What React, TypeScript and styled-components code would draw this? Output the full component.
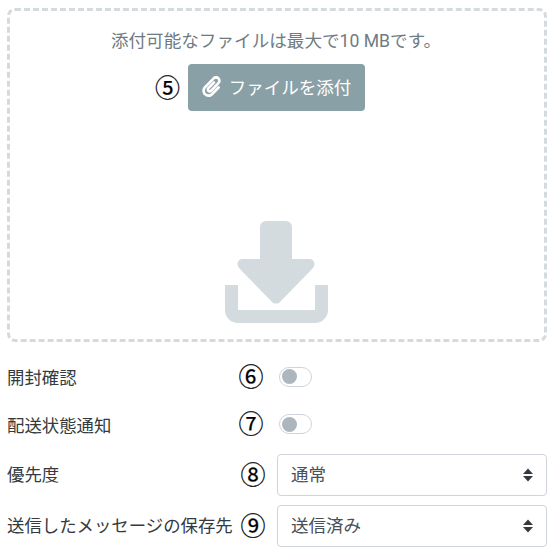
import styled, { createGlobalStyle } from "styled-components";
import { FaPaperclip } from "react-icons/fa";

const GlobalStyle = createGlobalStyle`
  html, body {
    margin: 0;
    padding: 0;
    background: #fff;
  }
  body {
    font-family: Roboto, "Noto Sans CJK JP", sans-serif;
    font-size: 17.5px;
    color: #343a40;
  }
`;

const Page = styled.div`
  width: 555px;
  height: 556px;
  box-sizing: border-box;
  padding: 8px 8px 0 7px;
  overflow: hidden;
`;

const DropZone = styled.div`
  box-sizing: border-box;
  width: 540px;
  height: 334px;
  padding: 20px 2px 0 0;
  border: 3px dashed #d3dbde;
  border-radius: 8px;
  display: flex;
  flex-direction: column;
  align-items: center;
`;

const Hint = styled.p`
  margin: 0;
  font-size: 17.6px;
  line-height: 21px;
  color: #6f7b82;
`;

const AttachWrap = styled.div`
  position: relative;
  margin-top: 12px;
`;

const AttachButton = styled.button`
  box-sizing: border-box;
  width: 177px;
  height: 47px;
  border: 0;
  border-radius: 4px;
  background: #8aa0a7;
  color: #fff;
  font-family: inherit;
  font-size: 17.5px;
  display: flex;
  align-items: center;
  justify-content: center;
  gap: 7px;
  padding: 0 0 2px;
`;

const Marker = styled.span`
  font-family: "Noto Sans CJK JP", sans-serif;
  font-size: 25px;
  line-height: 1;
  color: #000;
  width: 26px;
  margin-bottom: 3px;
  text-align: center;
  flex: none;
  -webkit-text-stroke: 0.25px #000;
`;

const ButtonMarker = styled(Marker)`
  position: absolute;
  left: -33px;
  top: 10px;
`;

const DropIcon = styled.svg`
  display: block;
  margin-top: 110px;
  width: 103px;
  height: 102px;
  fill: #d3dbde;
`;

const Settings = styled.div`
  display: flex;
  flex-direction: column;
  margin-top: 11px;
`;

const Row = styled.div<{ $height: number }>`
  display: flex;
  align-items: center;
  height: ${(p) => p.$height}px;
`;

const Label = styled.span<{ $wide?: boolean; $lift?: number }>`
  width: ${(p) => (p.$wide ? 233 : 231)}px;
  flex: none;
  font-size: 17.4px;
  white-space: nowrap;
  padding-bottom: ${(p) => p.$lift ?? 0}px;
`;

const Toggle = styled.span`
  box-sizing: border-box;
  width: 33px;
  height: 20px;
  margin-left: 15px;
  border: 1px solid #ced4da;
  border-radius: 10px;
  display: flex;
  align-items: center;
  padding-left: 2px;
  &::before {
    content: "";
    width: 15px;
    height: 15px;
    border-radius: 50%;
    background: #adb5bd;
  }
`;

const SelectBox = styled.div`
  box-sizing: border-box;
  width: 270px;
  height: 42px;
  margin-left: auto;
  padding: 0 12px 0 13px;
  border: 1px solid #ced4da;
  border-radius: 4px;
  display: flex;
  align-items: center;
  justify-content: space-between;
  font-size: 17.5px;
  color: #495057;
`;

const SelectValue = styled.span`
  padding-bottom: 3px;
`;

const Chevrons = styled.svg`
  width: 12px;
  height: 16px;
  fill: #343a40;
`;

const Select = ({ value }: { value: string }) => (
  <SelectBox>
    <SelectValue>{value}</SelectValue>
    <Chevrons viewBox="0 0 12 16">
      <path d="M6 1.5 11 7H1zM6 14.5 1 9h10z" />
    </Chevrons>
  </SelectBox>
);

export default function App() {
  return (
    <Page>
      <GlobalStyle />
      <DropZone>
        <Hint>添付可能なファイルは最大で10 MBです。</Hint>
        <AttachWrap>
          <ButtonMarker>⑤</ButtonMarker>
          <AttachButton>
            <FaPaperclip size={21} />
            ファイルを添付
          </AttachButton>
        </AttachWrap>
        <DropIcon viewBox="0 0 103 102">
          <path d="M41 0h20a6 6 0 0 1 6 6v32h17c5 0 7 5 4 9L55 81c-2 2-6 2-8 0L14 47c-3-4-1-9 4-9h17V6a6 6 0 0 1 6-6z" />
          <path d="M0 64h13v25h77V64h13v25a13 13 0 0 1-13 13H13A13 13 0 0 1 0 89z" />
        </DropIcon>
      </DropZone>
      <Settings>
        <Row $height={47}>
          <Label>開封確認</Label>
          <Marker>⑥</Marker>
          <Toggle />
        </Row>
        <Row $height={48}>
          <Label>配送状態通知</Label>
          <Marker>⑦</Marker>
          <Toggle />
        </Row>
        <Row $height={54}>
          <Label $wide $lift={4}>優先度</Label>
          <Marker>⑧</Marker>
          <Select value="通常" />
        </Row>
        <Row $height={48}>
          <Label $wide $lift={3}>送信したメッセージの保存先</Label>
          <Marker>⑨</Marker>
          <Select value="送信済み" />
        </Row>
      </Settings>
    </Page>
  );
}
